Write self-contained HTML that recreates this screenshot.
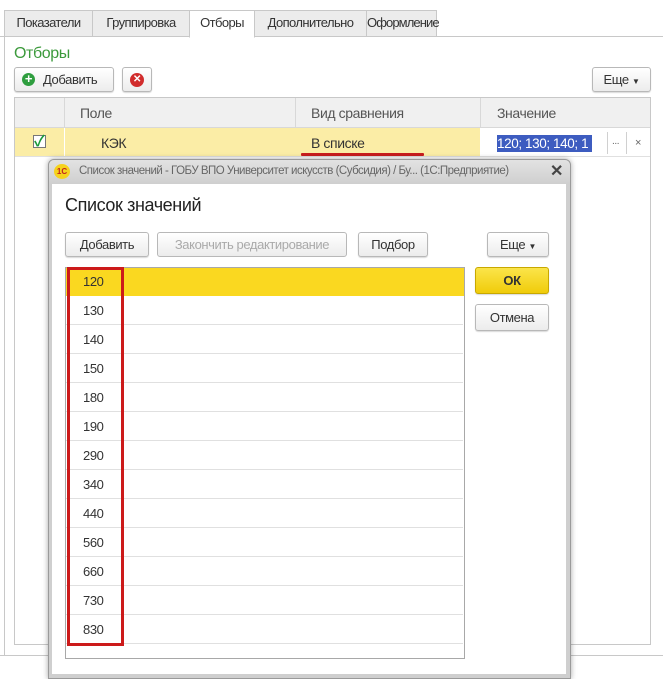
<!DOCTYPE html>
<html><head><meta charset="utf-8"><style>
*{box-sizing:border-box;margin:0;padding:0}
body{width:663px;height:663px;overflow:hidden;background:#fff;font-family:"Liberation Sans","Noto Sans CJK SC",sans-serif;font-size:13px;color:#333;position:relative;letter-spacing:-.4px}
.a{position:absolute}
.tab{position:absolute;top:10px;height:27px;border:1px solid #c8c8c8;background:#ececec;line-height:24px;text-align:center;font-size:13px;color:#333;letter-spacing:-.6px;white-space:nowrap}
.btn{position:absolute;border:1px solid #b8b8b8;border-radius:3px;background:linear-gradient(#fff,#ececec);box-shadow:0 1px 1px rgba(0,0,0,.15);text-align:center;font-size:13px;color:#333;white-space:nowrap}
.row{position:absolute;left:66px;width:397px;height:29px;border-bottom:1px solid #e0e0e0;padding-left:17px;line-height:30px;font-size:13px}
</style></head><body>
<div class="a" style="left:0;top:36px;width:663px;height:1px;background:#c8c8c8"></div>
<div class="a" style="left:4px;top:36px;width:1px;height:620px;background:#c8c8c8"></div>
<div class="tab" style="left:4px;width:89px">Показатели</div>
<div class="tab" style="left:92px;width:98px">Группировка</div>
<div class="tab" style="left:189px;width:66px;background:#fff;border-bottom-color:#fff;height:28px">Отборы</div>
<div class="tab" style="left:254px;width:113px">Дополнительно</div>
<div class="tab" style="left:366px;width:71px;letter-spacing:-.9px">Оформление</div>
<div class="a" style="left:14px;top:45px;font-size:16px;color:#3c9a3c">Отборы</div>
<div class="btn" style="left:14px;top:67px;width:100px;height:25px;line-height:23px;text-align:left;padding-left:28px">Добавить</div>
<div class="a" style="left:22px;top:73px;width:13px;height:13px;border-radius:50%;background:#2f9e3f;color:#fff;font-size:13px;line-height:12px;text-align:center;font-weight:bold">+</div>
<div class="btn" style="left:122px;top:67px;width:30px;height:25px"></div>
<div class="a" style="left:130px;top:73px;width:14px;height:14px;border-radius:50%;background:#d12c2c;color:#fff;font-size:10px;line-height:14px;text-align:center;font-weight:bold">✕</div>
<div class="btn" style="left:592px;top:67px;width:59px;height:25px;line-height:23px">Еще <span style="font-size:8px">▼</span></div>
<div class="a" style="left:14px;top:97px;width:637px;height:548px;border:1px solid #c8c8c8"></div>
<div class="a" style="left:15px;top:98px;width:635px;height:30px;background:#f0f0f0;border-bottom:1px solid #d8d8d8"></div>
<div class="a" style="left:64px;top:98px;width:1px;height:30px;background:#d8d8d8"></div>
<div class="a" style="left:295px;top:98px;width:1px;height:30px;background:#d8d8d8"></div>
<div class="a" style="left:480px;top:98px;width:1px;height:30px;background:#d8d8d8"></div>
<div class="a" style="left:80px;top:105px;font-size:14px;color:#555">Поле</div>
<div class="a" style="left:311px;top:105px;font-size:14px;color:#555">Вид сравнения</div>
<div class="a" style="left:497px;top:105px;font-size:14px;color:#555">Значение</div>
<div class="a" style="left:15px;top:128px;width:465px;height:28px;background:#fbeda6"></div>
<div class="a" style="left:64px;top:128px;width:1px;height:28px;background:#fff"></div>
<div class="a" style="left:33px;top:135px;width:13px;height:13px;border:1px solid #777;background:#fff"></div>
<div class="a" style="left:34px;top:130px;font-size:15px;color:#1a9a3a;font-weight:bold">✓</div>
<div class="a" style="left:101px;top:135px;font-size:14px">КЭК</div>
<div class="a" style="left:311px;top:135px;font-size:14px">В списке</div>
<div class="a" style="left:301px;top:153px;width:123px;height:3px;background:#c81e1e;border-radius:1px"></div>
<div class="a" style="left:497px;top:135px;width:95px;height:17px;background:#3d5cc0;color:#fff;font-size:13.5px;line-height:17px;overflow:hidden;white-space:nowrap">120; 130; 140; 1</div>
<div class="a" style="left:607px;top:132px;width:1px;height:22px;background:#d0d0d0"></div>
<div class="a" style="left:626px;top:132px;width:1px;height:22px;background:#d0d0d0"></div>
<div class="a" style="left:612px;top:136px;font-size:10px;color:#666">...</div>
<div class="a" style="left:635px;top:137px;font-size:11px;color:#666">×</div>
<div class="a" style="left:15px;top:156px;width:635px;height:1px;background:#e0e0e0"></div>
<div class="a" style="left:0;top:655px;width:663px;height:1px;background:#c8c8c8"></div>
<div class="a" style="left:48px;top:159px;width:523px;height:520px;background:#cfcfcf;border:1px solid #9a9a9a;border-radius:6px 6px 0 0;box-shadow:0 0 6px rgba(0,0,0,.35)"></div>
<div class="a" style="left:49px;top:160px;width:521px;height:24px;background:linear-gradient(#e2e2e2,#cfcfcf);border-radius:5px 5px 0 0"></div>
<div class="a" style="left:54px;top:164px;width:16px;height:15px;border-radius:50%;background:#f6d21c;color:#c0241e;font-size:8px;font-weight:bold;line-height:15px;text-align:center;letter-spacing:0">1С</div>
<div class="a" style="left:79px;top:165px;font-size:11.5px;color:#666;white-space:nowrap;letter-spacing:-.5px">Список значений - ГОБУ ВПО Университет искусств (Субсидия) / Бу... (1С:Предприятие)</div>
<div class="a" style="left:550px;top:161px;font-size:16px;color:#444;font-weight:bold">✕</div>
<div class="a" style="left:52px;top:184px;width:514px;height:490px;background:#fff"></div>
<div class="a" style="left:65px;top:195px;font-size:18px;color:#222">Список значений</div>
<div class="btn" style="left:65px;top:232px;width:84px;height:25px;line-height:23px">Добавить</div>
<div class="btn" style="left:157px;top:232px;width:190px;height:25px;line-height:23px;color:#aaa;box-shadow:none">Закончить редактирование</div>
<div class="btn" style="left:358px;top:232px;width:70px;height:25px;line-height:23px">Подбор</div>
<div class="btn" style="left:487px;top:232px;width:62px;height:25px;line-height:23px">Еще <span style="font-size:8px">▼</span></div>
<div class="a" style="left:65px;top:267px;width:400px;height:392px;border:1px solid #a8a8a8"></div>
<div class="a" style="left:66px;top:268px;width:398px;height:28px;background:#fad820"></div>
<div class="row" style="top:267px;border-bottom:none">120</div>
<div class="row" style="top:296px">130</div>
<div class="row" style="top:325px">140</div>
<div class="row" style="top:354px">150</div>
<div class="row" style="top:383px">180</div>
<div class="row" style="top:412px">190</div>
<div class="row" style="top:441px">290</div>
<div class="row" style="top:470px">340</div>
<div class="row" style="top:499px">440</div>
<div class="row" style="top:528px">560</div>
<div class="row" style="top:557px">660</div>
<div class="row" style="top:586px">730</div>
<div class="row" style="top:615px">830</div>
<div class="a" style="left:67px;top:267px;width:57px;height:379px;border:3px solid #cc1a1a"></div>
<div class="btn" style="left:475px;top:267px;width:74px;height:27px;line-height:25px;background:linear-gradient(#fbe54a,#f0cc0a);border-color:#c8a800;font-weight:bold">ОК</div>
<div class="btn" style="left:475px;top:304px;width:74px;height:27px;line-height:25px">Отмена</div>
</body></html>
